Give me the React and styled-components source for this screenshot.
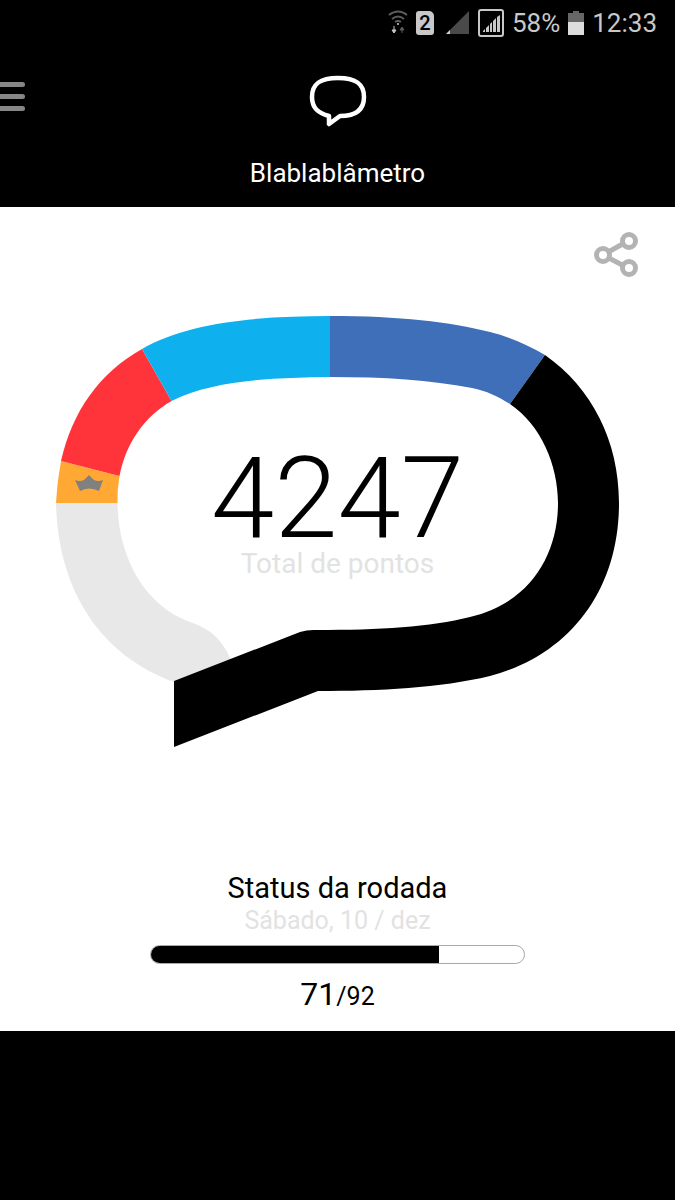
import React from 'react';
import styled, { createGlobalStyle } from 'styled-components';

const round = {
  points: 4247,
  date: 'Sábado, 10 / dez',
  done: 71,
  total: 92,
};

const App = () => {
  return (
    <>
      <GlobalStyle />
      <Screen>
        <StatusBar>
          <svg width="20" height="26" viewBox="0 0 20 26" fill="none">
            <g stroke="#5c5c5c" strokeWidth="2">
              <path d="M1 5 Q10 -2 19 5" />
              <path d="M4 9 Q10 4 16 9" />
              <path d="M7 12 Q10 10 13 12" />
            </g>
            <path d="M6 16 v6 M4 20 l2 3 l2 -3 z" stroke="#c8c8c8" fill="#c8c8c8" />
            <path d="M14 23 v-5 M12 20 l2 -3 l2 3 z" stroke="#5c5c5c" fill="#5c5c5c" />
            <circle cx="10" cy="14" r="1" fill="#c8c8c8" />
          </svg>
          <SimCard>2</SimCard>
          <SignalIcons>
            <svg width="24" height="24" viewBox="0 0 24 24">
              <path d="M23 0 V23 H0 Z" fill="#4a4a4a" />
              <path d="M4 19 V23 H0 Z" fill="#d0d0d0" />
            </svg>
            <svg width="26" height="28" viewBox="0 0 26 28">
              <rect x="1" y="1" width="24" height="26" rx="2" fill="none" stroke="#c8c8c8" strokeWidth="2" />
              <path d="M5 23 v-1 l2 -2 v3z M8 23 v-4 l3 -3 v7z M12 23 v-8 l2 -2 v10z M15 23 v-11 l3 -3 v14z M19 23 v-15 l3 -2 v17z" fill="#c8c8c8" />
            </svg>
          </SignalIcons>
          <StatusText>58%</StatusText>
          <svg width="16" height="24" viewBox="0 0 16 24">
            <path d="M5 0 H11 V2 H16 V11 H0 V2 H5 Z" fill="#666" />
            <path d="M0 11 H16 V24 H0 Z" fill="#dcdcdc" />
          </svg>
          <StatusText>12:33</StatusText>
        </StatusBar>

        <Header>
          <MenuButton aria-label="Menu">
            <span />
            <span />
            <span />
          </MenuButton>
          <Logo viewBox="0 0 58 52">
            <path d="M29 3 C46 3 55 8 55 22 C55 36 45 41 31 41 L20 49 V41 C9 38 3 33 3 22 C3 8 12 3 29 3 Z" />
          </Logo>
          <Title>Blablablâmetro</Title>
        </Header>

        <Main>
          <ShareButton aria-label="Compartilhar">
            <svg width="46" height="46" viewBox="0 0 46 46">
              <path d="M35 10 L10 24 L35 37" />
              <circle cx="36" cy="10" r="6.5" />
              <circle cx="10" cy="24" r="6.5" />
              <circle cx="36" cy="37" r="6.5" />
            </svg>
          </ShareButton>

          <Gauge>
            <Bubble viewBox="56 316 563 431">
              <path fill="#e8e8e8" d="M56 503 H117.5 C118 555 143 605 190 622 C208 628 222 638 231 660 L174 682 C100 655 58 590 56 503 Z" />
              <path fill="#ffa834" d="M56 503 Q57 482 61 461 L119.5 476 Q117 490 117.5 503 Z" />
              <path fill="#ff343b" d="M61 461 C72 412 99 373 142 349 L171.5 401 C144 417 126 443 119.5 476 Z" />
              <path fill="#0eb0ee" d="M142 349 C190 321 265 316 330 316 V377 C275 378 215 379 171.5 401 Z" />
              <path fill="#3f6fb9" d="M330 316 C400 316 450 322 490 332 C510 337 528 345 545 355 L510 404 C497 396 487 391 472 388 C430 380 385 377 330 377 Z" />
              <path fill="#000" d="M545 355 C592 388 619 441 619 503 C619 590 570 655 490 676 C440 688 380 691 318 691 L174 747 V681 L300 632 Q308 629.5 316 630 C380 630 430 627 470 617 C530 603 558 555 558 503 C558 465 541 425 510 404 Z" />
              <path fill="#808080" d="M75 480 Q80 482 84 480 L89 475 L94 480 Q98 482 103 480 L99 491 Q89 486 80 491 Z" />
            </Bubble>
            <Score>
              <Points>{round.points}</Points>
              <Caption>Total de pontos</Caption>
            </Score>
          </Gauge>

          <Round>
            <RoundTitle>Status da rodada</RoundTitle>
            <RoundDate>{round.date}</RoundDate>
            <Track role="progressbar" aria-valuenow={round.done} aria-valuemax={round.total} aria-label="Status da rodada">
              <Fill style={{ width: `${(round.done / round.total) * 100}%` }} />
            </Track>
            <Count>
              {round.done}
              <small>/{round.total}</small>
            </Count>
          </Round>
        </Main>
      </Screen>
    </>
  );
};

const GlobalStyle = createGlobalStyle`
  * {
    box-sizing: border-box;
  }

  body {
    margin: 0;
    background: #000;
    font-family: Roboto, "Liberation Sans", sans-serif;
  }

  h1, h2, p {
    margin: 0;
    font-weight: 400;
  }

  button {
    padding: 0;
    border: 0;
    background: none;
    cursor: pointer;
  }
`;

const Screen = styled.div`
  display: flex;
  flex-direction: column;
  min-height: 100vh;
  background: #000;
`;

const StatusBar = styled.div`
  display: flex;
  align-items: center;
  justify-content: flex-end;
  gap: 8px;
  height: 46px;
  padding: 0 18px;
`;

const SimCard = styled.span`
  width: 18px;
  height: 24px;
  border-radius: 3px 5px 3px 3px;
  background: #c8c8c8;
  color: #000;
  font-size: 20px;
  font-weight: 500;
  line-height: 24px;
  text-align: center;
`;

const SignalIcons = styled.div`
  display: flex;
  align-items: center;
  gap: 8px;
  padding-left: 4px;
`;

const StatusText = styled.span`
  color: #c8c8c8;
  font-size: 26px;
  line-height: 32px;
`;

const Header = styled.header`
  display: grid;
  grid-template-columns: 1fr auto 1fr;
  justify-items: center;
  row-gap: 30px;
  padding: 29px 0 18px;
`;

const MenuButton = styled.button`
  display: flex;
  flex-direction: column;
  justify-self: start;
  align-self: start;
  gap: 7px;
  margin-top: 7px;

  span {
    width: 25px;
    height: 5px;
    border-radius: 0 3px 3px 0;
    background: #868686;
  }
`;

const Logo = styled.svg`
  width: 58px;
  height: 52px;
  fill: none;
  stroke: #fff;
  stroke-width: 4.5;
  stroke-linejoin: round;
`;

const Title = styled.h1`
  grid-column: 1 / -1;
  color: #fff;
  font-size: 26px;
  line-height: 32px;
`;

const Main = styled.main`
  display: flex;
  flex-direction: column;
  align-items: center;
  padding: 24px 36px 16px;
  background: #fff;
`;

const ShareButton = styled.button`
  align-self: flex-end;
  height: 46px;

  svg {
    display: block;
    fill: none;
    stroke: #b3b3b3;
    stroke-width: 5;
  }

  circle {
    fill: #fff;
  }
`;

const Gauge = styled.section`
  display: grid;
  justify-items: center;
  width: 100%;
  padding: 0 20px;
  margin-top: 39px;

  > * {
    grid-area: 1 / 1;
  }
`;

const Bubble = styled.svg`
  display: block;
  width: 100%;
`;

const Score = styled.div`
  padding-top: 132px;
  text-align: center;
`;

const Points = styled.p`
  color: #000;
  font-size: 114px;
  font-weight: 300;
  line-height: 100px;
`;

const Caption = styled.p`
  color: #e2e2e2;
  font-size: 28px;
  line-height: 32px;
`;

const Round = styled.section`
  display: flex;
  flex-direction: column;
  align-items: center;
  width: 100%;
  margin-top: 124px;
`;

const RoundTitle = styled.h2`
  color: #000;
  font-size: 29px;
  line-height: 34px;
`;

const RoundDate = styled.p`
  color: #e2e2e2;
  font-size: 25px;
  line-height: 32px;
`;

const Track = styled.div`
  width: 100%;
  max-width: 375px;
  height: 19px;
  margin-top: 8px;
  border: 1px solid #a8a8a8;
  border-radius: 10px;
  overflow: hidden;
`;

const Fill = styled.div`
  height: 100%;
  background: #000;
`;

const Count = styled.p`
  margin-top: 12px;
  color: #000;
  font-size: 32px;
  line-height: 36px;

  small {
    font-size: 25px;
  }
`;

export default App;
